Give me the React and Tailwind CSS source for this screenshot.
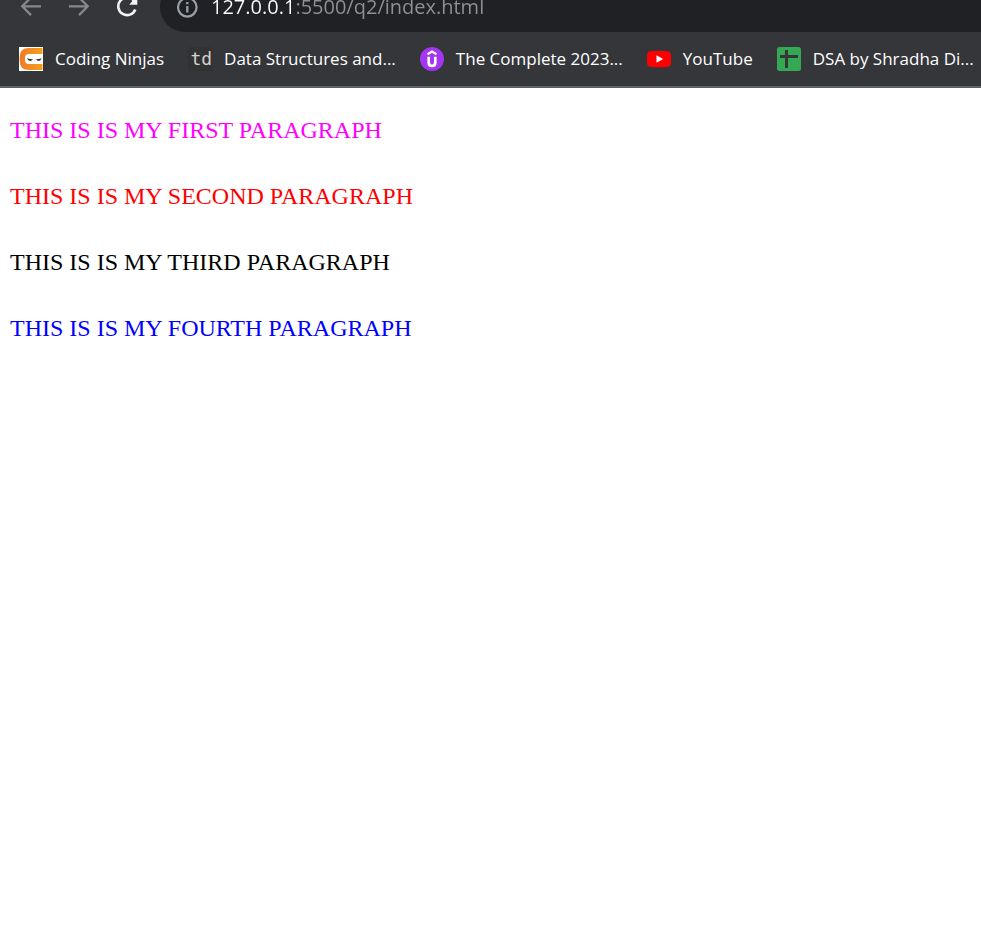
import React from "react";

function BackIcon() {
  return (
    <svg width="24" height="24" viewBox="0 0 24 24" fill="none" stroke="#87888b" strokeWidth="2.200" aria-hidden="true">
      <path d="M22 11.300H3.500M12 2.500L3.200 11.300L12 20.100" />
    </svg>
  );
}

function ForwardIcon() {
  return (
    <svg width="24" height="24" viewBox="0 0 24 24" fill="none" stroke="#87888b" strokeWidth="2.200" aria-hidden="true">
      <path d="M2 11.300H20.500M12 2.500L20.800 11.300L12 20.100" />
    </svg>
  );
}

function ReloadIcon() {
  return (
    <svg width="24" height="24" viewBox="0 0 24 24" fill="none" aria-hidden="true">
      <path d="M18.600 5.400A8.800 8.800 0 1 0 20.300 14.500" stroke="#f1f3f4" strokeWidth="2.600" />
      <path d="M22.300 0V9.700H14.300Z" fill="#f1f3f4" />
    </svg>
  );
}

function InfoIcon() {
  return (
    <svg width="24" height="24" viewBox="0 0 24 24" fill="none" aria-hidden="true">
      <circle cx="12.300" cy="12.300" r="9.300" stroke="#9aa0a6" strokeWidth="2.200" />
      <path d="M12.300 11V17.500M12.300 7V9.300" stroke="#9aa0a6" strokeWidth="2.300" />
    </svg>
  );
}

function NinjaIcon() {
  return (
    <svg width="24" height="24" viewBox="0 0 24 24" aria-hidden="true">
      <defs>
        <linearGradient id="ninja" x1="0" x2="1" y1="0" y2="0">
          <stop offset="0" stopColor="#f07a28" />
          <stop offset="1" stopColor="#f2a11b" />
        </linearGradient>
      </defs>
      <rect width="24" height="24" fill="#fff" />
      <path d="M23.500 1H10Q0.700 1 0.700 10V14Q0.700 23 10 23H23.500V17H10Q6 17 6 13V11Q6 7 10 7H23.500Z" fill="url(#ninja)" />
      <path d="M8 11.200Q11 12.300 14 12.300Q13 14 11 14Q9 14 8 11.200ZM22.500 11.200Q20 12.300 17 12.300Q18 14 20 14Q21.700 14 22.500 11.200Z" fill="#333" />
    </svg>
  );
}

function TdIcon() {
  return (
    <span className="flex size-6 items-center justify-end bg-[#323232] font-['DejaVu_Sans_Mono',monospace] text-lg leading-6 text-[#d2d2d2]">
      td
    </span>
  );
}

function UdemyIcon() {
  return (
    <svg width="24" height="24" viewBox="0 0 24 24" fill="none" aria-hidden="true">
      <circle cx="12" cy="12" r="12" fill="#a435f0" />
      <path d="M7.500 7.300L12 4.600L16.500 7.300" stroke="#fff" strokeWidth="2.200" />
      <path d="M8.700 9.700V15.500Q8.700 19 12 19Q15.300 19 15.300 15.500V9.700" stroke="#fff" strokeWidth="2.700" />
    </svg>
  );
}

function YouTubeIcon() {
  return (
    <svg width="24" height="24" viewBox="0 0 24 24" aria-hidden="true">
      <path d="M3 4.200Q12 3.200 21 4.200Q23.500 4.500 23.800 7Q24.200 12 23.800 17Q23.500 19.500 21 19.800Q12 20.800 3 19.800Q0.500 19.500 0.200 17Q-0.200 12 0.200 7Q0.500 4.500 3 4.200Z" fill="#f00" />
      <path d="M9.500 8.300L16 12L9.500 15.700Z" fill="#fff" />
    </svg>
  );
}

function SheetIcon() {
  return (
    <svg width="24" height="24" viewBox="0 0 24 24" aria-hidden="true">
      <rect width="24" height="24" rx="2.500" fill="#34a853" />
      <path d="M3 8H8V3H11V8H21V11H11V21H8V11H3Z" fill="#35363a" />
    </svg>
  );
}

const bookmarks = [
  { label: "Coding Ninjas", Icon: NinjaIcon },
  { label: "Data Structures and...", Icon: TdIcon },
  { label: "The Complete 2023...", Icon: UdemyIcon },
  { label: "YouTube", Icon: YouTubeIcon },
  { label: "DSA by Shradha Di...", Icon: SheetIcon },
];

const paragraphs = [
  { text: "THIS IS IS MY FIRST PARAGRAPH", color: "text-[#ff00ff]" },
  { text: "THIS IS IS MY SECOND PARAGRAPH", color: "text-[#ff0000]" },
  { text: "THIS IS IS MY THIRD PARAGRAPH", color: "text-black" },
  { text: "THIS IS IS MY FOURTH PARAGRAPH", color: "text-[#0000ff]" },
];

export default function App() {
  return (
    <div className="min-h-screen bg-white">
      <header className="border-b-2 border-[#606164] bg-[#35363a] font-['Open_Sans','Noto_Sans',sans-serif]">
        <div className="flex h-8 items-end overflow-hidden">
          <div className="flex h-[50px] flex-1 shrink-0 items-center">
            <div className="flex gap-6 pr-[21px] pl-[19px]">
              <button type="button" aria-label="Back"><BackIcon /></button>
              <button type="button" aria-label="Forward"><ForwardIcon /></button>
              <button type="button" aria-label="Reload"><ReloadIcon /></button>
            </div>
            <div className="flex h-full flex-1 items-center gap-3 rounded-l-full bg-[#202124] pl-[15px]">
              <InfoIcon />
              <input
                type="text"
                aria-label="Address"
                defaultValue="127.0.0.1:5500/q2/index.html"
                className="min-w-0 flex-1 bg-linear-to-r from-white from-[84px] to-[#8f9194] to-[84px] bg-clip-text text-xl leading-7 text-transparent outline-none"
              />
            </div>
          </div>
        </div>
        <nav aria-label="Bookmarks" className="flex h-[54px] items-center gap-6 overflow-hidden pl-[19px]">
          {bookmarks.map(({ label, Icon }) => (
            <a key={label} href="#" className="flex shrink-0 items-center gap-3 text-[17px] leading-6 text-white">
              <Icon />
              <span>{label}</span>
            </a>
          ))}
        </nav>
      </header>
      <main className="flex flex-col gap-10 px-[10px] py-[29px] font-['Liberation_Serif',serif] text-2xl leading-[26px]">
        {paragraphs.map(({ text, color }) => (
          <p key={text} className={color}>{text}</p>
        ))}
      </main>
    </div>
  );
}
